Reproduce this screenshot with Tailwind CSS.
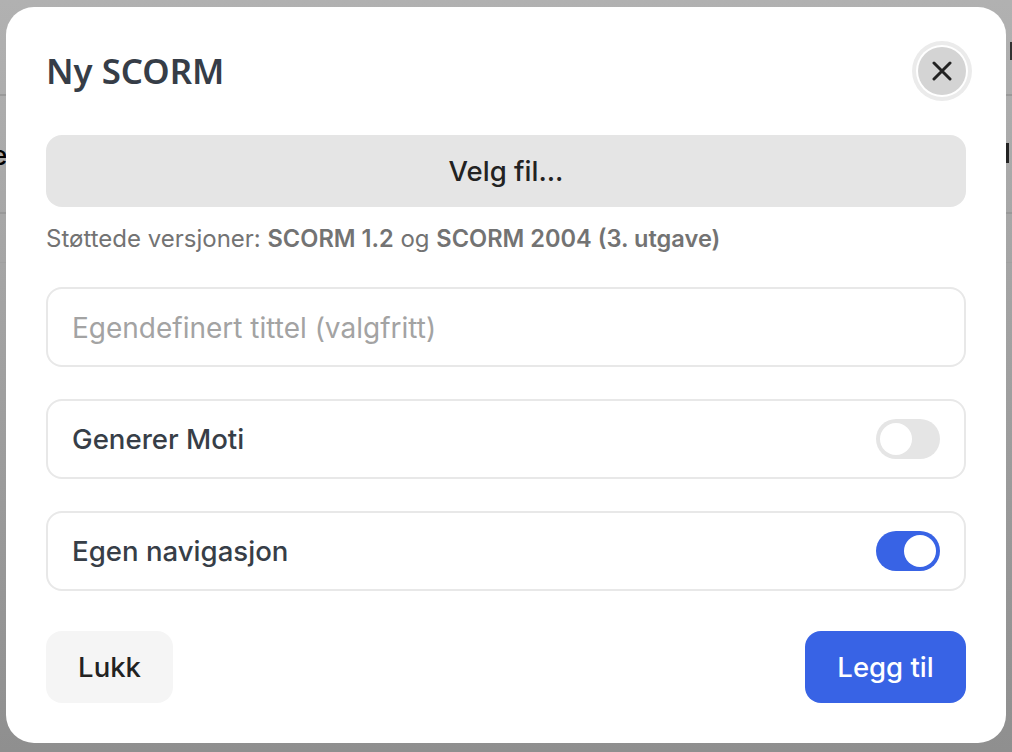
<!DOCTYPE html>
<html lang="en">
<head>
  <meta charset="UTF-8" />
  <title>Ny SCORM</title>
  <script src="https://cdn.jsdelivr.net/npm/@tailwindcss/browser@4"></script>
</head>
<body class="relative w-[1012px] h-[752px] overflow-hidden bg-gradient-to-b from-[#b1b1b1] to-[#8f8f8f] font-['Inter',sans-serif]">

  <!-- page behind the dialog -->
  <div class="absolute inset-0">
    <div class="absolute top-[42px] right-0 w-[2px] h-[18px] bg-[#333]"></div>
    <div class="absolute top-[94px] left-0 right-0 h-[2px] bg-[#999]"></div>
    <div class="absolute top-[143px] right-[3px] w-[3px] h-[20px] bg-[#222]"></div>
    <div class="absolute top-[141px] left-0 text-[26px] font-medium leading-[30px] text-black w-[6px] overflow-hidden"><span class="block -ml-[8px]">e</span></div>
    <div class="absolute top-[212px] left-0 right-0 h-[2px] bg-[#999]"></div>
    <div class="absolute top-[262px] left-0 right-0 h-px bg-[#a0a0a0]"></div>
  </div>

  <!-- dialog -->
  <div class="relative ml-[6px] mt-[7px] w-[1000px] h-[736px] rounded-[28px] bg-white px-10 pt-[40px] flex flex-col">
    <div class="flex items-center justify-between h-[48px]">
      <h2 class="font-['Noto_Sans',sans-serif] text-[34.8px] font-semibold text-[#363d47]">Ny SCORM</h2>
      <button class="w-12 h-12 rounded-full bg-[#d4d4d4] shadow-[0_0_0_2px_#fff,0_0_0_6px_#ebebeb] flex items-center justify-center">
        <svg viewBox="0 0 20 20" class="w-5 h-5" fill="none" stroke="#222" stroke-width="3" stroke-linecap="round"><path d="M2 2L18 18M18 2L2 18"/></svg>
      </button>
    </div>

    <button class="mt-[40px] h-[72px] pt-[2px] rounded-2xl bg-[#e5e5e5] text-[27.5px] font-medium text-[#222]">Velg fil...</button>
    <p class="mt-[16px] h-[32px] text-[24px] leading-[32px] text-[#737373]">Støttede versjoner: <span class="font-semibold text-[23.6px]">SCORM 1.2</span> og <span class="font-semibold text-[23.6px]">SCORM 2004 (3. utgave)</span></p>

    <div class="mt-[32px] h-[80px] pt-[2px] rounded-2xl border-2 border-[#e8e8e8] px-[24px] flex items-center text-[28px] text-[#a3a3a3]">Egendefinert tittel (valgfritt)</div>

    <div class="mt-[32px] h-[80px] rounded-2xl border-2 border-[#e8e8e8] pl-[24px] pr-[24px] flex items-center justify-between text-[27.6px] font-medium text-[#373e47]">
      <span class="pt-[2px]">Generer Moti</span>
      <span class="w-16 h-10 rounded-full bg-[#e5e5e5] p-1 flex justify-start"><span class="w-8 h-8 rounded-full bg-white"></span></span>
    </div>

    <div class="mt-[32px] h-[80px] rounded-2xl border-2 border-[#e8e8e8] pl-[24px] pr-[24px] flex items-center justify-between text-[27.6px] font-medium text-[#373e47]">
      <span class="pt-[2px]">Egen navigasjon</span>
      <span class="w-16 h-10 rounded-full bg-[#3863e5] p-1 flex justify-end"><span class="w-8 h-8 rounded-full bg-white"></span></span>
    </div>

    <div class="mt-[40px] flex justify-between">
      <button class="w-[127px] h-[72px] pt-[2px] rounded-2xl bg-[#f5f5f5] text-[27.5px] font-medium text-[#222]">Lukk</button>
      <button class="w-[161px] h-[72px] pt-[2px] rounded-2xl bg-[#3863e5] text-[27.5px] font-medium text-white">Legg til</button>
    </div>
  </div>
</body>
</html>
